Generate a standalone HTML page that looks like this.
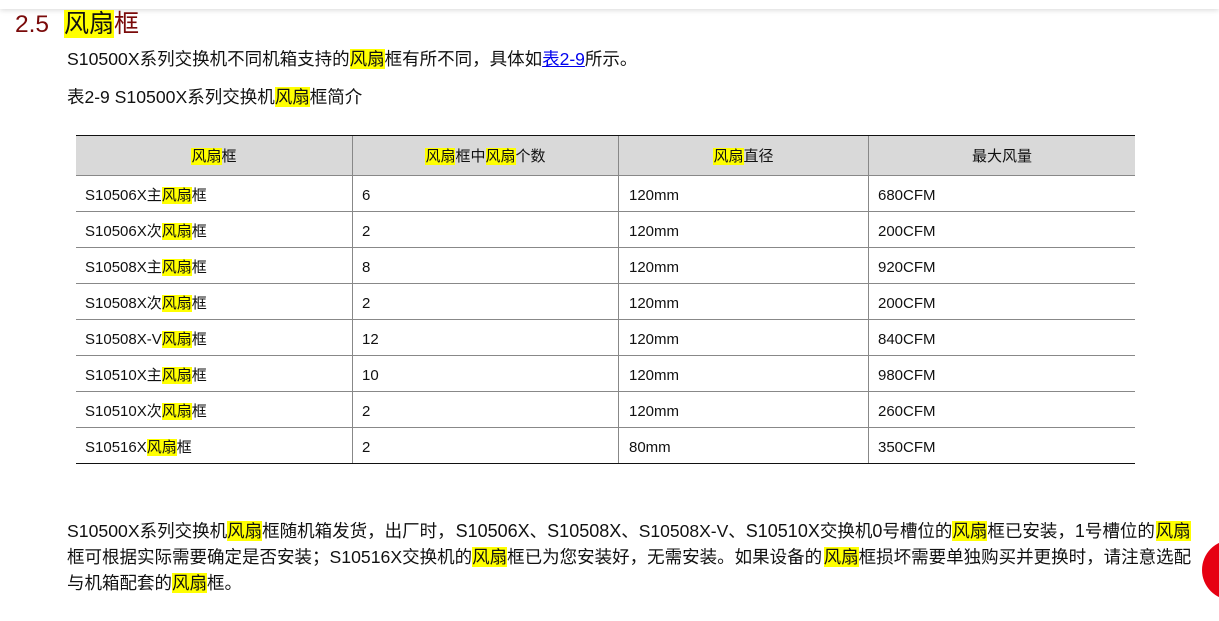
<!DOCTYPE html>
<html><head><meta charset="utf-8">
<style>
html,body{margin:0;padding:0;background:#fff}
body{width:1219px;height:621px;overflow:hidden;position:relative;font-family:"Liberation Sans","Noto Sans CJK SC",sans-serif;color:#000}
mark{background:#ff0;color:inherit}
.t{position:absolute;white-space:nowrap}
.p{font-size:17.5px;line-height:26px;left:67px;color:#111}
.p b{font-weight:400;font-size:17.65px}
.p i{font-style:normal;font-size:18px}
.c{font-size:15px;line-height:20px;color:#111}
.h{text-align:center}
.l{position:absolute}
a{color:#00e;text-decoration:underline}
</style></head><body>
<div class="l" style="left:0;top:0;width:1219px;height:9px;background:#fff;box-shadow:0 1px 6px rgba(0,0,0,.16)"></div>
<div class="t" style="left:15px;top:10px;font-size:24.5px;line-height:30px;color:#7a0a0a">2.5</div>
<div class="t" style="left:64px;top:9px;font-size:25px;line-height:30px;color:#7a0a0a"><mark style="color:#111">风扇</mark>框</div>
<div class="t p" style="top:46px"><b>S10500X</b>系列交换机不同机箱支持的<mark>风扇</mark>框有所不同，具体如<a>表2-9</a>所示。</div>
<div class="t p" style="top:84px">表2-9 <b>S10500X</b>系列交换机<mark>风扇</mark>框简介</div>

<div class="l" style="left:76px;top:135px;width:1059px;height:41px;background:#d9d9d9"></div>
<div class="l" style="left:76px;top:135px;width:1059px;height:1px;background:#111"></div>
<div class="l" style="left:76px;top:175px;width:1059px;height:1px;background:#888"></div>
<div class="l" style="left:76px;top:211px;width:1059px;height:1px;background:#888"></div>
<div class="l" style="left:76px;top:247px;width:1059px;height:1px;background:#888"></div>
<div class="l" style="left:76px;top:283px;width:1059px;height:1px;background:#888"></div>
<div class="l" style="left:76px;top:319px;width:1059px;height:1px;background:#888"></div>
<div class="l" style="left:76px;top:355px;width:1059px;height:1px;background:#888"></div>
<div class="l" style="left:76px;top:391px;width:1059px;height:1px;background:#888"></div>
<div class="l" style="left:76px;top:427px;width:1059px;height:1px;background:#888"></div>
<div class="l" style="left:76px;top:463px;width:1059px;height:1px;background:#111"></div>
<div class="l" style="left:352px;top:136px;width:1px;height:327px;background:#888"></div>
<div class="l" style="left:618px;top:136px;width:1px;height:327px;background:#888"></div>
<div class="l" style="left:868px;top:136px;width:1px;height:327px;background:#888"></div>

<div class="t c h" style="left:76px;width:276px;top:147px"><mark>风扇</mark>框</div>
<div class="t c h" style="left:353px;width:265px;top:147px"><mark>风扇</mark>框中<mark>风扇</mark>个数</div>
<div class="t c h" style="left:619px;width:249px;top:147px"><mark>风扇</mark>直径</div>
<div class="t c h" style="left:869px;width:266px;top:147px">最大风量</div>

<div class="t c" style="left:85px;top:186px">S10506X主<mark>风扇</mark>框</div>
<div class="t c" style="left:362px;top:186px">6</div><div class="t c" style="left:629px;top:186px">120mm</div><div class="t c" style="left:878px;top:186px">680CFM</div>
<div class="t c" style="left:85px;top:222px">S10506X次<mark>风扇</mark>框</div>
<div class="t c" style="left:362px;top:222px">2</div><div class="t c" style="left:629px;top:222px">120mm</div><div class="t c" style="left:878px;top:222px">200CFM</div>
<div class="t c" style="left:85px;top:258px">S10508X主<mark>风扇</mark>框</div>
<div class="t c" style="left:362px;top:258px">8</div><div class="t c" style="left:629px;top:258px">120mm</div><div class="t c" style="left:878px;top:258px">920CFM</div>
<div class="t c" style="left:85px;top:294px">S10508X次<mark>风扇</mark>框</div>
<div class="t c" style="left:362px;top:294px">2</div><div class="t c" style="left:629px;top:294px">120mm</div><div class="t c" style="left:878px;top:294px">200CFM</div>
<div class="t c" style="left:85px;top:330px">S10508X-V<mark>风扇</mark>框</div>
<div class="t c" style="left:362px;top:330px">12</div><div class="t c" style="left:629px;top:330px">120mm</div><div class="t c" style="left:878px;top:330px">840CFM</div>
<div class="t c" style="left:85px;top:366px">S10510X主<mark>风扇</mark>框</div>
<div class="t c" style="left:362px;top:366px">10</div><div class="t c" style="left:629px;top:366px">120mm</div><div class="t c" style="left:878px;top:366px">980CFM</div>
<div class="t c" style="left:85px;top:402px">S10510X次<mark>风扇</mark>框</div>
<div class="t c" style="left:362px;top:402px">2</div><div class="t c" style="left:629px;top:402px">120mm</div><div class="t c" style="left:878px;top:402px">260CFM</div>
<div class="t c" style="left:85px;top:438px">S10516X<mark>风扇</mark>框</div>
<div class="t c" style="left:362px;top:438px">2</div><div class="t c" style="left:629px;top:438px">80mm</div><div class="t c" style="left:878px;top:438px">350CFM</div>

<div class="t p" style="top:518px"><b>S10500X</b>系列交换机<mark>风扇</mark>框随机箱发货，出厂时，<i style="margin-left:1px">S10506X</i>、<i>S10508X</i>、S10508X-V、<i>S10510X</i>交换机<i>0</i>号槽位的<mark>风扇</mark>框已安装，<i>1</i>号槽位的<mark style="margin-left:.8px">风扇</mark></div>
<div class="t p" style="top:544px">框可根据实际需要确定是否安装；<b>S10516X</b>交换机的<mark>风扇</mark>框已为您安装好，无需安装。如果设备的<mark style="margin-left:1.5px">风扇</mark>框损坏需要单独购买并更换时，请注意选配</div>
<div class="t p" style="top:570px">与机箱配套的<mark>风扇</mark>框。</div>

<div class="l" style="left:1202px;top:540px;width:60px;height:60px;border-radius:50%;background:#e60012"></div>
</body></html>
